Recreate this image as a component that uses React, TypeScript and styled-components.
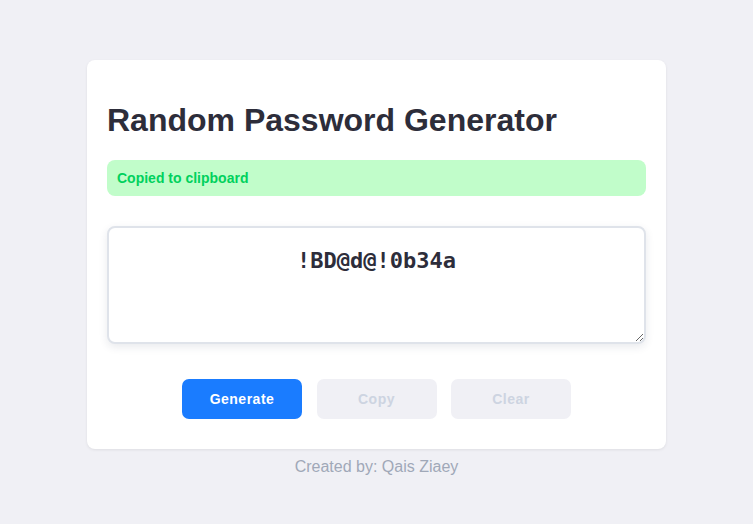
import React, { useState } from "react";
import styled, { createGlobalStyle } from "styled-components";

const GlobalStyle = createGlobalStyle`
  html, body {
    margin: 0;
    padding: 0;
    background: #f0f0f5;
    font-family: "Liberation Sans", Arial, sans-serif;
  }
`;

const PageWrapper = styled.div`
  display: flex;
  flex-direction: column;
  align-items: center;
  padding-top: 60px;
`;

const Card = styled.div`
  width: 579px;
  box-sizing: border-box;
  background: #ffffff;
  border-radius: 8px;
  padding: 42px 20px 30px;
  box-shadow: 0 1px 3px rgba(0, 0, 0, 0.08);
`;

const Title = styled.h1`
  margin: 0 0 21px;
  font-size: 32px;
  font-weight: 700;
  color: #2d2d3a;
  line-height: 37px;
`;

const Alert = styled.div`
  height: 36px;
  box-sizing: border-box;
  display: flex;
  align-items: center;
  padding: 0 10px;
  border-radius: 8px;
  background: #c1fdca;
  color: #00d15d;
  font-size: 14px;
  font-weight: 700;
`;

const PasswordBox = styled.textarea`
  display: block;
  width: 100%;
  height: 118px;
  box-sizing: border-box;
  margin-top: 30px;
  padding: 20px 12px;
  border: 2px solid #dfe3ea;
  border-radius: 8px;
  box-shadow: 0 3px 8px rgba(40, 50, 80, 0.1);
  font-family: "DejaVu Sans Mono", monospace;
  font-weight: 700;
  font-size: 22px;
  color: #2d2d3a;
  text-align: center;
  outline: none;
  resize: vertical;
`;

const ButtonRow = styled.div`
  display: flex;
  justify-content: center;
  gap: 14.5px;
  margin-top: 35px;
`;

const Button = styled.button<{ $primary?: boolean }>`
  width: 120px;
  height: 40px;
  border: none;
  border-radius: 7px;
  font-family: "Liberation Sans", Arial, sans-serif;
  font-size: 14px;
  font-weight: 700;
  letter-spacing: 0.5px;
  cursor: ${(p) => (p.$primary ? "pointer" : "default")};
  background: ${(p) => (p.$primary ? "#1a7cff" : "#f0f0f5")};
  color: ${(p) => (p.$primary ? "#ffffff" : "#cdd4e1")};
`;

const Footer = styled.p`
  margin: 9px 0 0;
  font-size: 16px;
  color: #a0a8b8;
`;

const App = () => {
  const [password] = useState("!BD@d@!0b34a");

  return (
    <PageWrapper>
      <GlobalStyle />
      <Card>
        <Title>Random Password Generator</Title>
        <Alert>Copied to clipboard</Alert>
        <PasswordBox value={password} readOnly />
        <ButtonRow>
          <Button $primary>Generate</Button>
          <Button disabled>Copy</Button>
          <Button disabled>Clear</Button>
        </ButtonRow>
      </Card>
      <Footer>Created by: Qais Ziaey</Footer>
    </PageWrapper>
  );
};

export default App;
